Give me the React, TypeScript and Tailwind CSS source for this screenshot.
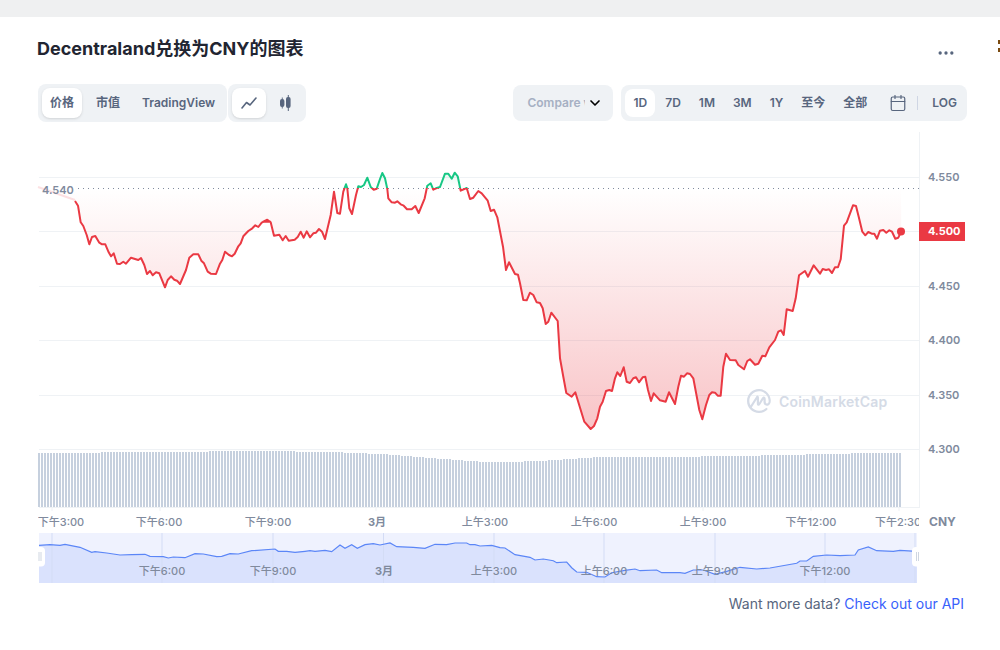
import { Calendar, ChevronDown, MoreHorizontal } from "lucide-react";

type P = [number, number];
const z = (ox: number, oy: number, pts: number[][]): P[] => pts.map(([a, b]) => [ox + a / 3, oy + b / 3]);

const pricePts: P[] = [
  ...z(30, 165, [[135,108],[144,122],[152,172],[160,183],[170,210],[178,238],[186,216],[196,213],[208,233],[216,238],[226,238],[236,262],[243,274],[251,265],[261,296],[270,297],[280,290],[288,296],[303,278],[315,282],[325,285],[333,279],[343,300],[351,327],[360,318],[368,331],[378,322],[388,325],[405,367],[413,345],[423,334],[433,344],[441,347],[450,357],[468,315],[478,278],[490,268],[505,268],[514,287],[522,295],[533,320],[542,326],[558,327],[570,296],[577,285],[585,260],[597,270],[606,274],[614,266],[625,244],[632,235],[640,214],[655,198],[667,190],[676,181],[685,186],[695,173],[712,165],[720,170]]),
  ...z(260, 165, [[10,170],[22,164],[32,172],[42,212],[58,209],[68,226],[77,213],[86,227],[104,224],[113,216],[122,200],[131,218],[140,199],[150,217],[160,205],[168,203],[177,192],[186,200],[195,222],[212,150],[222,80],[232,144],[240,146],[250,80],[258,58],[262,70],[268,130],[276,147],[288,90],[295,64],[303,66],[312,60],[322,38],[332,66],[341,74],[350,71],[360,42],[367,24],[375,40],[382,72],[385,100],[395,112],[405,113],[412,109],[422,118],[431,122],[441,133],[455,133],[466,123],[476,144],[494,100],[502,62],[512,55],[520,74],[530,69],[540,66],[555,26],[565,26],[575,41],[584,23],[593,34],[602,77],[620,69],[630,102],[640,98],[655,78],[665,85],[683,107],[692,138],[702,134],[712,157],[729,245],[738,315],[747,292],[765,327],[774,329],[780,355]]),
  ...z(490, 200, [[100,300],[110,301],[120,278],[130,285],[140,307],[150,309],[158,325],[167,372],[175,365],[184,338],[203,363],[210,475],[220,530],[229,579],[245,590],[256,577],[283,665],[302,687],[312,678],[322,655],[330,620],[338,605],[348,573],[358,570],[366,573],[375,535],[382,517],[391,528],[401,502],[410,545],[420,549],[430,535],[438,532],[447,547],[458,532],[466,530],[474,570],[483,603],[491,580],[510,601],[527,605],[537,577],[555,612],[565,560],[573,527],[582,530],[591,520],[600,522],[610,535],[628,630],[637,658],[648,615],[658,585],[666,577],[675,578],[683,587],[692,587]]),
  ...z(720, 190, [[10,530],[18,491],[30,510],[47,511],[55,525],[72,538],[82,513],[90,508],[105,524],[115,521],[127,497],[136,499],[148,472],[165,450],[175,425],[183,421],[191,435],[200,358],[218,363],[227,325],[237,256],[255,243],[264,260],[281,226],[300,251],[308,237],[318,240],[327,238],[336,249],[345,232],[354,232],[362,208],[372,107],[380,97],[399,46],[408,48],[416,80],[427,125],[436,136],[445,126],[455,131],[463,131],[471,146],[480,122],[490,120],[499,128],[508,121],[516,125],[526,146],[535,143],[544,124]]),
];

const nav: P[] = [
  ...z(0, 440, [[117,316],[150,314],[180,316],[195,313],[240,322],[275,337],[285,335],[320,339],[360,345],[395,344],[435,343],[450,349],[490,350],[505,354],[520,351],[555,353],[585,341],[610,342],[650,350],[665,349],[690,341],[715,342],[755,332],[825,327],[835,334],[860,334],[885,337],[915,334],[930,332],[945,334],[975,331],[995,335]]),
  ...z(340, 530, [[0,45],[15,55],[35,44],[52,55],[75,44],[100,41],[120,45],[150,39],[170,50],[220,52],[255,55],[285,43],[320,44],[345,39],[380,39],[390,44],[405,44],[420,48],[455,46],[480,53],[495,54],[525,74],[570,82],[585,90],[610,87],[640,92],[650,98],[680,96],[695,113],[710,126],[740,127],[770,140],[795,141],[815,128],[855,121],[885,117]]),
  ...z(640, 530, [[0,122],[50,120],[65,128],[120,128],[135,130],[160,120],[190,120],[225,133],[260,124],[300,112],[350,117],[390,114],[470,100],[480,93],[500,93],[520,79],[560,75],[600,77],[645,75],[655,60],[685,51],[710,62],[760,64],[780,61],[830,64]]),
];

const str = (pts: P[]) => pts.map(([x, y]) => x.toFixed(1) + "," + y.toFixed(1)).join(" ");

const volumeKeys: P[] = [[38,453],[100,452.5],[260,451],[330,452],[380,454],[430,458],[490,462.5],[540,461],[590,457.5],[700,456.5],[760,455.5],[850,453.5],[902,453]];
const volumeTop = (x: number) => {
  for (let i = 1; i < volumeKeys.length; i++) {
    const [a, b] = volumeKeys[i - 1];
    const [c, d] = volumeKeys[i];
    if (x <= c) return Math.round(b + ((x - a) / (c - a)) * (d - b));
  }
  return 453;
};
const bars = Array.from({ length: 288 }, (_, i) => 38 + i * 3);

const gridY = [177, 231, 286, 340, 395, 449];
const yLabels: [string, number][] = [["4.550", 177], ["4.450", 286], ["4.400", 340], ["4.350", 395], ["4.300", 449]];
const xLabels: [string, number, boolean][] = [["下午3:00", 61, false], ["下午6:00", 159, false], ["下午9:00", 268, false], ["3月", 377, true], ["上午3:00", 485, false], ["上午6:00", 594, false], ["上午9:00", 703, false], ["下午12:00", 811, false], ["下午2:30", 898, false]];
const xTicks = [52, 160, 268, 376, 485, 594, 703, 811, 899];
const navLabels: [string, number, boolean][] = [["下午6:00", 162, false], ["下午9:00", 273, false], ["3月", 384, true], ["上午3:00", 494, false], ["上午6:00", 604, false], ["上午9:00", 715, false], ["下午12:00", 825, false]];
const navGrid = [52, 162, 273, 383.5, 494, 604, 715, 825];

function Chart() {
  return (
    <svg viewBox="0 122 1000 468" width="1000" height="468" className="block">
      <defs>
        <linearGradient id="redFill" gradientUnits="userSpaceOnUse" x1="0" y1="188" x2="0" y2="430">
          <stop offset="0" stopColor="#ea3943" stopOpacity="0" />
          <stop offset="1" stopColor="#ea3943" stopOpacity="0.3" />
        </linearGradient>
        <linearGradient id="greenFill" gradientUnits="userSpaceOnUse" x1="0" y1="188" x2="0" y2="170">
          <stop offset="0" stopColor="#16c784" stopOpacity="0" />
          <stop offset="1" stopColor="#16c784" stopOpacity="0.12" />
        </linearGradient>
        <clipPath id="above"><rect x="38" y="122" width="881" height="66" /></clipPath>
        <clipPath id="below"><rect x="38" y="188" width="881" height="300" /></clipPath>
        <clipPath id="plot"><rect x="38" y="500" width="881" height="40" /></clipPath>
      </defs>

      {gridY.map((y) => <line key={y} x1="39" x2="919" y1={y + 0.5} y2={y + 0.5} stroke="#eff2f5" />)}
      <line x1="39" x2="919" y1="507.5" y2="507.5" stroke="#eff2f5" />
      <line x1="919.5" x2="919.5" y1="132" y2="508" stroke="#eff2f5" />
      {xTicks.map((x) => <line key={x} x1={x} x2={x} y1="507" y2="511" stroke="#eff2f5" />)}

      {bars.map((x) => <rect key={x} x={x} y={volumeTop(x)} width="2" height={507 - volumeTop(x)} fill="#c6d0de" />)}

      <polygon points={str([[38, 188], ...pricePts, [901, 188]])} fill="url(#redFill)" clipPath="url(#below)" />
      <polygon points={str([[38, 188], ...pricePts, [901, 188]])} fill="url(#greenFill)" clipPath="url(#above)" />
      <line x1="78" x2="919" y1="188.5" y2="188.5" stroke="#808a9d" strokeDasharray="1 4" />
      <polyline points={str([[38, 187], [75, 200]])} fill="none" stroke="#ea3943" strokeOpacity="0.15" strokeWidth="2" />
      <polyline points={str(pricePts)} fill="none" stroke="#ea3943" strokeWidth="2" strokeLinejoin="round" clipPath="url(#below)" />
      <polyline points={str(pricePts)} fill="none" stroke="#16c784" strokeWidth="2" strokeLinejoin="round" clipPath="url(#above)" />
      <circle cx="901" cy="231.5" r="4" fill="#ea3943" />

      <text x="42" y="194" fontSize="11" fontWeight="600" fill="#808a9d">4.540</text>

      {yLabels.map(([t, y]) => <text key={t} x="928" y={y + 4} fontSize="11" fontWeight="600" fill="#808a9d">{t}</text>)}
      <rect x="919" y="222" width="46" height="19" fill="#ea3943" />
      <text x="928" y="235" fontSize="11" fontWeight="700" fill="#ffffff">4.500</text>
      <text x="929" y="526" fontSize="12" fontWeight="700" fill="#808a9d">CNY</text>

      <g clipPath="url(#plot)">
        {xLabels.map(([t, x, b]) => <text key={t} x={x} y="525.5" textAnchor="middle" fontSize="11" fontWeight={b ? 700 : 500} fill="#808a9d">{t}</text>)}
      </g>

      <g fill="#d5dbe6">
        <path transform="translate(747 389)" d="M20.738 14.341c-.419.265-.912.298-1.286.087-.476-.27-.738-.898-.738-1.774v-2.618c0-1.264-.5-2.164-1.336-2.407-1.416-.413-2.482 1.32-2.882 1.972l-2.498 4.05v-4.95c-.028-1.14-.398-1.821-1.1-2.027-.466-.135-1.161-.081-1.837.953l-5.597 8.987A9.875 9.875 0 0 1 2.326 12c0-5.414 4.339-9.818 9.672-9.818 5.332 0 9.67 4.404 9.67 9.818.004.018.002.034.003.053.05 1.049-.29 1.883-.933 2.29zm3.08-2.34V11.947l-.001-.055C23.787 5.298 18.48 0 11.998 0 5.381 0 0 5.383 0 12c0 6.616 5.382 12 11.998 12 3.036 0 5.935-1.153 8.16-3.245.443-.416.467-1.116.055-1.562a1.080 1.080 0 0 0-1.530-.058 9.479 9.479 0 0 1-6.652 2.677c-2.890 0-5.476-1.243-7.287-3.21l5.043-8.087v3.729c0 1.790.693 2.369 1.275 2.539.582.170 1.472.054 2.406-1.471l2.775-4.505c.089-.145.170-.270.245-.378v2.277c0 1.670.67 3.006 1.837 3.664 1.052.593 2.374.540 3.452-.140 1.306-.824 2.010-2.344 1.932-4.178z" />
        <text x="779" y="407" fontSize="14" fontWeight="600" letterSpacing="0.2">CoinMarketCap</text>
      </g>

      <rect x="39" y="533" width="878" height="50" fill="#eff2fe" />
      <polygon points={str([[39, 583], ...nav, [917, 551], [917, 583]])} fill="#dae2fd" />
      {navGrid.map((x) => <line key={x} x1={x} x2={x} y1="533" y2="583" stroke="#d3dcf5" />)}
      <line x1="915" x2="915" y1="533" y2="583" stroke="#d3dcf5" />
      <polyline points={str(nav)} fill="none" stroke="#5b86f7" strokeWidth="1.2" />
      {navLabels.map(([t, x, b]) => <text key={t} x={x} y="575" textAnchor="middle" fontSize="11" fontWeight={b ? 700 : 500} fill="#808a9d">{t}</text>)}

      <rect x="35" y="547" width="10" height="19.5" rx="4" fill="#ffffff" />
      <rect x="912" y="547" width="11" height="19.5" rx="4" fill="#ffffff" />
      <g stroke="#c3cbd9" strokeWidth="0.8">
        <line x1="39" x2="39" y1="552" y2="561" />
        <line x1="41" x2="41" y1="552" y2="561" />
        <line x1="916.5" x2="916.5" y1="552" y2="561" />
        <line x1="918.5" x2="918.5" y1="552" y2="561" />
      </g>
    </svg>
  );
}

const btn = "flex h-full items-center px-2 rounded-lg text-xs font-semibold text-[#58667e]";

export default function App() {
  return (
    <div className="relative min-h-screen overflow-hidden bg-white" style={{ fontFamily: 'Inter, "Noto Sans CJK SC", sans-serif' }}>
      <div className="h-4 box-content border-b border-[#eff0f1] bg-[#eff0f1]" />

      <div className="absolute top-10 right-0 flex flex-col gap-1">
        <div className="h-1 w-0.5 bg-[#7a4a10]" />
        <div className="h-1 w-0.5 bg-[#7a4a10]" />
      </div>

      <div className="flex items-start justify-between pt-3.5 pl-9 pr-11">
        <h2 className="ml-px text-lg leading-9 font-bold text-[#222531]">Decentraland兑换为CNY的图表</h2>
        <div className="pt-3 text-[#58667e]"><MoreHorizontal size={20} /></div>
      </div>

      <div className="mt-4 pt-px ml-9.5 mr-8 pr-px flex items-center">
        <div className="flex h-[38px] items-center gap-1.5 rounded-lg bg-[#eff2f5] p-1">
          <div className={btn + " bg-white shadow-sm"}>价格</div>
          <div className={btn}>市值</div>
          <div className={btn}>TradingView</div>
        </div>
        <div className="ml-px flex h-[38px] items-center gap-0.5 rounded-lg bg-[#eff2f5] p-1">
          <div className="flex h-full w-8.5 items-center justify-center rounded-lg bg-white shadow-sm">
            <svg viewBox="0 0 16 12" width="16" height="12" fill="none" stroke="#58667e" strokeWidth="1.6" strokeLinejoin="round" strokeLinecap="round">
              <path d="M1 11 5.5 5.5 9 8 15 1" />
            </svg>
          </div>
          <div className="flex h-full w-8.5 items-center justify-center">
            <svg viewBox="0 0 14 16" width="14" height="16" fill="#58667e">
              <rect x="2" y="4" width="4.4" height="8" rx="2" />
              <rect x="3.8" y="2.5" width="0.9" height="11" />
              <rect x="8" y="2" width="4.6" height="11" rx="2" />
              <rect x="9.8" y="0" width="1" height="16" />
            </svg>
          </div>
        </div>

        <div className="ml-auto flex h-9 w-[100px] items-center justify-between rounded-lg bg-[#eff2f5] pl-3.5 pr-2.5">
          <span className="w-[58px] overflow-hidden whitespace-nowrap text-xs font-semibold text-[#a6b0c3]">Compare with</span>
          <ChevronDown size={16} strokeWidth={2.5} className="text-black" />
        </div>

        <div className="ml-2 flex h-9 items-center gap-0.5 rounded-lg bg-[#eff2f5] py-1 pl-1 pr-2.5">
          <div className={btn + " bg-white"}>1D</div>
          <div className={btn}>7D</div>
          <div className={btn}>1M</div>
          <div className={btn}>3M</div>
          <div className={btn}>1Y</div>
          <div className={btn}>至今</div>
          <div className={btn}>全部</div>
          <div className="ml-3 flex h-full items-center text-[#58667e]"><Calendar size={18} strokeWidth={1.6} /></div>
          <div className="ml-2 h-3.5 w-px bg-[#cfd6e4]" />
          <div className="pl-3 text-xs font-semibold text-[#58667e]">LOG</div>
        </div>
      </div>

      <Chart />

      <p className="mt-1 pr-9 text-right text-sm font-normal text-[#58667e]">
        Want more data? <a className="text-[#3861fb]">Check out our API</a>
      </p>
    </div>
  );
}
